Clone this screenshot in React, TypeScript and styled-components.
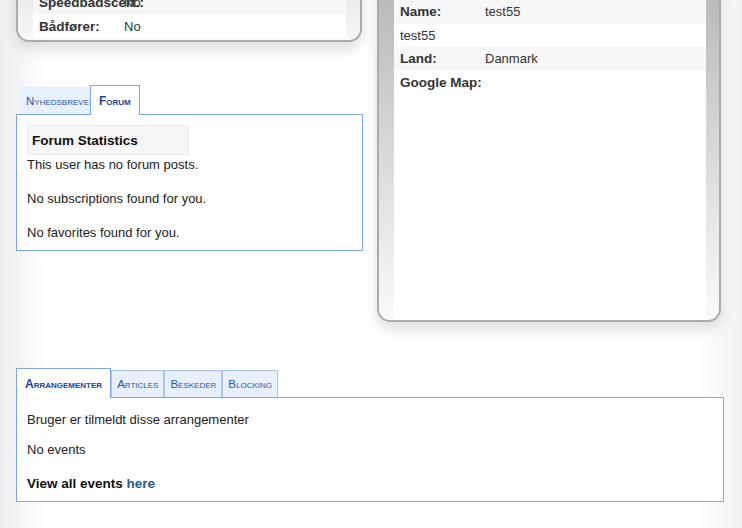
import React from 'react'
import styled, { createGlobalStyle } from 'styled-components'

const GlobalStyle = createGlobalStyle`
html, body {
  margin: 0;
  padding: 0;
}
body {
  height: 528px;
  overflow: hidden;
  background: linear-gradient(to right, #eeeeee 0, #ffffff 46px, #ffffff calc(100% - 44px), #f1f1f1 100%);
  font-family: "Liberation Sans", Arial, sans-serif;
  font-size: 13px;
  color: #222;
}
`

type InfoRow = { label?: string; value: string }

const boatRows: InfoRow[] = [
  { label: 'Speedbådscert.:', value: 'No' },
  { label: 'Bådfører:', value: 'No' },
]

const profileRows: InfoRow[] = [
  { label: 'Name:', value: 'test55' },
  { value: 'test55' },
  { label: 'Land:', value: 'Danmark' },
  { label: 'Google Map:', value: '' },
]

type TabItem = { name: string; active?: boolean; tight?: boolean }

const forumTabs: TabItem[] = [{ name: 'Nyhedsbreve', tight: true }, { name: 'Forum', active: true }]
const eventTabs: TabItem[] = [
  { name: 'Arrangementer', active: true },
  { name: 'Articles' },
  { name: 'Beskeder' },
  { name: 'Blocking' },
]

const App: React.FC = () => {
  return (
    <>
      <GlobalStyle />
      <Page>
        <Columns>
          <LeftColumn>
            <Card $width={346} $padRight={14} $padBottom={2} $top="#e4e4e4" $bottom="#f8f8f8">
              <CardBody>
                {boatRows.map((r, i) => (
                  <Row key={i} $odd={i % 2 === 0}>
                    <Label>{r.label}</Label>
                    <Value>{r.value}</Value>
                  </Row>
                ))}
              </CardBody>
            </Card>

            <Tabs $gap={43}>
              <TabStrip $indent={4}>
                {forumTabs.map((t) => (
                  <Tab key={t.name} $active={t.active} $tight={t.tight} $soft>
                    {t.name}
                  </Tab>
                ))}
              </TabStrip>
              <Panel $padTop={10}>
                <StatsHeading>Forum Statistics</StatsHeading>
                <Line $after={14}>This user has no forum posts.</Line>
                <Line $after={14}>No subscriptions found for you.</Line>
                <Line>No favorites found for you.</Line>
              </Panel>
            </Tabs>
          </LeftColumn>

          <RightColumn>
            <Card $width={344} $padRight={13} $padBottom={0} $top="#b8b8b8" $bottom="#fafafa">
              <CardBody $minHeight={320}>
                {profileRows.map((r, i) => (
                  <Row key={i} $odd={i % 2 === 0} $single={!r.label}>
                    {r.label && <Label>{r.label}</Label>}
                    <Value>{r.value}</Value>
                  </Row>
                ))}
              </CardBody>
            </Card>
          </RightColumn>
        </Columns>

        <Tabs $gap={46}>
          <TabStrip>
            {eventTabs.map((t) => (
              <Tab key={t.name} $active={t.active}>
                {t.name}
              </Tab>
            ))}
          </TabStrip>
          <Panel $padTop={12}>
            <Line $after={10}>Bruger er tilmeldt disse arrangementer</Line>
            <Line $after={14}>No events</Line>
            <Line>
              <Strong>
                View all events <Link href="#">here</Link>
              </Strong>
            </Line>
          </Panel>
        </Tabs>
      </Page>
    </>
  )
}

export default App

const Page = styled.div`
  margin-top: -26px;
  padding: 0 18px 0 16px;
`

const Columns = styled.div`
  display: grid;
  grid-template-columns: 347px 1fr;
  column-gap: 14px;
  align-items: start;
`

const LeftColumn = styled.div`
  display: flex;
  flex-direction: column;
`

const RightColumn = styled.div`
  margin-top: 9px;
`

const Card = styled.div<{ $width: number; $padRight: number; $padBottom: number; $top: string; $bottom: string }>`
  box-sizing: border-box;
  width: ${(p) => p.$width}px;
  padding: 15px ${(p) => p.$padRight}px ${(p) => p.$padBottom}px 15px;
  border: 2px solid #ababab;
  border-radius: 13px;
  background: linear-gradient(to bottom, ${(p) => p.$top}, ${(p) => p.$bottom});
  box-shadow: 0 7px 14px rgba(0, 0, 0, 0.13);
`

const CardBody = styled.div<{ $minHeight?: number }>`
  background: #fff;
  min-height: ${(p) => (p.$minHeight ? `${p.$minHeight}px` : 'auto')};
`

const Row = styled.div<{ $odd: boolean; $single?: boolean }>`
  display: grid;
  grid-template-columns: ${(p) => (p.$single ? '1fr' : '85px 1fr')};
  padding: 4px 6px;
  line-height: 15.5px;
  background: ${(p) => (p.$odd ? '#f7f7f7' : '#ffffff')};
  color: #333;
`

const Label = styled.span`
  font-weight: bold;
  font-size: 13.5px;
  white-space: nowrap;
  overflow: visible;
`

const Value = styled.span`
  white-space: nowrap;
`

const Tabs = styled.div<{ $gap: number }>`
  margin-top: ${(p) => p.$gap}px;
`

const TabStrip = styled.div<{ $indent?: number }>`
  display: flex;
  align-items: flex-end;
  padding-left: ${(p) => p.$indent ?? 0}px;
`

const Tab = styled.div<{ $active?: boolean; $soft?: boolean; $tight?: boolean }>`
  box-sizing: border-box;
  height: ${(p) => (p.$active ? 30 : 27)}px;
  margin-bottom: ${(p) => (p.$active ? -1 : 0)}px;
  padding: ${(p) => (p.$tight ? '0 0 0 5px' : p.$active ? '0 8px' : '0 5px')};
  display: flex;
  align-items: center;
  font-variant: small-caps;
  font-size: ${(p) => (p.$active ? 12 : 11.5)}px;
  font-weight: ${(p) => (p.$active ? 'bold' : 'normal')};
  color: ${(p) => (p.$active ? '#1c4596' : '#2a58a8')};
  background: ${(p) => (p.$active ? '#ffffff' : '#e8f0fd')};
  border: 1px solid ${(p) => (p.$active ? '#7ba7ef' : p.$soft ? '#e8f0fd' : '#a9c6f3')};
  border-bottom: none;
  position: relative;
  z-index: ${(p) => (p.$active ? 1 : 0)};
  cursor: pointer;
`

const Panel = styled.div<{ $padTop: number }>`
  border: 1px solid #7ba7ef;
  background: #fff;
  padding: ${(p) => p.$padTop}px 10px 7px;
`

const StatsHeading = styled.div`
  box-sizing: border-box;
  width: 162px;
  height: 30px;
  line-height: 30px;
  padding: 0 4px;
  background: #f6f6f6;
  border: 1px solid #ececec;
  font-weight: bold;
  font-size: 13.5px;
  color: #111;
`

const Line = styled.p<{ $after?: number }>`
  margin: 0 0 ${(p) => p.$after ?? 0}px;
  line-height: 20px;
  color: #222;
`

const Strong = styled.strong`
  font-size: 13.5px;
  color: #111;
`

const Link = styled.a`
  color: #1f5d8b;
  text-decoration: none;
`
